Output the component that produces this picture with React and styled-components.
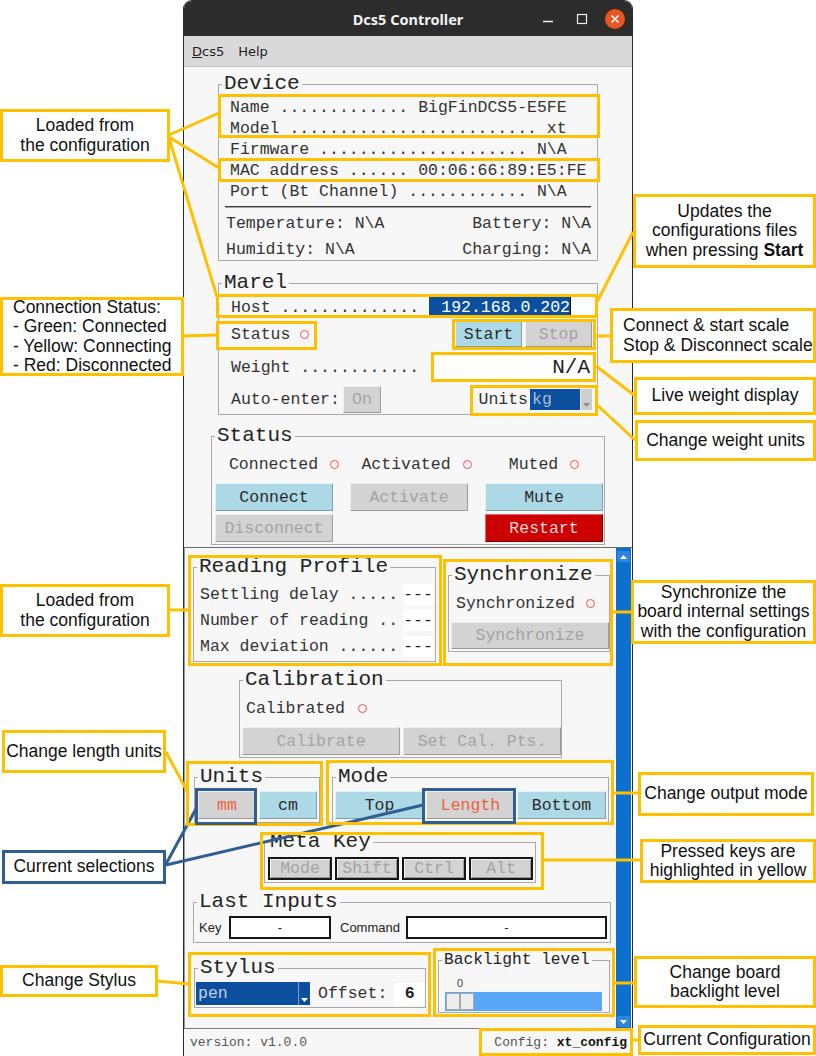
import React from 'react';
import styled, { createGlobalStyle } from 'styled-components';

const MONO = "'Liberation Mono', 'DejaVu Sans Mono', monospace";
const SANS = "'Liberation Sans', Arial, sans-serif";
const UI = "'DejaVu Sans', 'Noto Sans', sans-serif";
const YELLOW = '#ffc000';
const BLUE = '#2f5f92';

const GlobalStyle = createGlobalStyle`
  *, *::before, *::after { box-sizing: border-box; }
  html, body { margin: 0; padding: 0; background: #ffffff; }
`;

const Page = styled.div`
  position: relative;
  width: 816px;
  height: 1056px;
  overflow: hidden;
  background: #ffffff;
`;

const Window = styled.div`
  width: 450px;
  height: 1056px;
  margin-left: 183px;
  display: flex;
  flex-direction: column;
  background: #f7f7f7;
  border: 1px solid #2a2a2a;
  border-bottom: none;
  border-radius: 9px 9px 0 0;
  overflow: hidden;
`;

const TitleBar = styled.div`
  flex: none;
  height: 35px;
  display: grid;
  grid-template-columns: 1fr auto 1fr;
  align-items: center;
  padding: 0 7px;
  background: #2c2c2c;
`;

const Title = styled.div`
  grid-column: 2;
  font-family: 'Noto Sans', 'DejaVu Sans', sans-serif;
  font-weight: 700;
  font-size: 14.5px;
  color: #f2f2f2;
`;

const Controls = styled.div`
  grid-column: 3;
  justify-self: end;
  display: flex;
  align-items: center;
  gap: 13.5px;
`;

const CtlButton = styled.div`
  width: 20px;
  height: 20px;
  border-radius: 50%;
  display: flex;
  align-items: center;
  justify-content: center;
  background: ${p => (p.$close ? '#e95420' : 'transparent')};
`;

const MenuBar = styled.div`
  flex: none;
  height: 31px;
  display: flex;
  align-items: center;
  gap: 14px;
  padding-left: 8px;
  background: #d9d9d9;
  border-bottom: 1px solid #c4c4c4;
  font-family: ${UI};
  font-size: 13px;
  color: #1e1e1e;
`;

const Frame = styled.fieldset`
  flex: none;
  width: ${p => p.$w}px;
  margin: ${p => p.$mt || 0}px ${p => (p.$ml == null ? 'auto' : '0')} ${p => p.$mb || 0}px
    ${p => (p.$ml == null ? 'auto' : `${p.$ml}px`)};
  padding: 0;
  min-inline-size: 0;
  border: 1px solid #a9a9a9;
`;

const Legend = styled.legend`
  margin-left: 3px;
  padding: 0 2px;
  font-family: ${MONO};
  font-size: ${p => (p.$small ? 16.2 : 21)}px;
  line-height: ${p => (p.$small ? 18 : 22)}px;
  color: #232323;
`;

const Body = styled.div`
  padding: ${p => p.$pad};
`;

const Line = styled.div`
  display: flex;
  align-items: center;
  justify-content: ${p => (p.$between ? 'space-between' : 'flex-start')};
  height: ${p => p.$h || 21}px;
  margin-top: ${p => p.$mt || 0}px;
  padding-left: ${p => p.$pl || 0}px;
  font-family: ${MONO};
  font-size: 16.5px;
  color: #333333;
  white-space: pre;
`;

const Push = styled.span`
  margin-left: ${p => p.$ml || 'auto'};
`;

const Separator = styled.div`
  height: 2px;
  margin: 4px 0 5px -1px;
  border-top: 1px solid #3a3a3a;
  border-bottom: 1px solid #a4a4a4;
`;

const Indicator = styled.span`
  flex: none;
  width: 9px;
  height: 9px;
  margin-left: ${p => p.$gap || 12}px;
  border-radius: 50%;
  border: 1.5px solid #ff4c4c;
`;

const tones = {
  blue: ['#add8e6', '#2b2b2b', '#e4f3f8', '#7e9ea8'],
  off: ['#d3d3d3', '#a3a3a3', '#efefef', '#9b9b9b'],
  red: ['#cc0000', '#ffd9d9', '#e46a6a', '#7a0000'],
  sel: ['#d3d3d3', '#f0603c', '#efefef', '#9b9b9b'],
};

const Button = styled.div`
  flex: none;
  ${p => (p.$w ? `width: ${p.$w}px;` : '')}
  height: ${p => p.$h || 28}px;
  margin-left: ${p => p.$ml || 0};
  ${p => (p.$col ? `grid-column: ${p.$col};` : '')}
  display: flex;
  align-items: center;
  justify-content: center;
  font-family: ${MONO};
  font-size: 16.5px;
  background: ${p => tones[p.$tone][0]};
  color: ${p => tones[p.$tone][1]};
  border: 1px solid;
  border-color: ${p => `${tones[p.$tone][2]} ${tones[p.$tone][3]} ${tones[p.$tone][3]} ${tones[p.$tone][2]}`};
`;

const KeyButton = styled(Button)`
  border: 2px solid #161616;
  box-shadow: inset 1px 1px 0 #f2f2f2, inset -1px -1px 0 #9a9a9a;
`;

const ButtonRow = styled.div`
  display: flex;
  gap: ${p => p.$gap || 0}px;
  margin-top: ${p => p.$mt || 0}px;
`;

const Grid3 = styled.div`
  display: grid;
  grid-template-columns: repeat(3, 118px);
  column-gap: 17px;
  height: ${p => p.$h}px;
  margin-top: ${p => p.$mt}px;
`;

const IndCell = styled.div`
  display: flex;
  align-items: center;
  justify-content: center;
  padding-left: ${p => p.$shift || 0}px;
  font-family: ${MONO};
  font-size: 16.5px;
  color: #333333;
`;

const Entry = styled.div`
  flex: none;
  width: ${p => p.$w}px;
  height: ${p => p.$h}px;
  margin-left: ${p => p.$ml || 0};
  display: flex;
  align-items: center;
  justify-content: ${p => p.$justify || 'center'};
  padding: 0 ${p => p.$px || 0}px;
  background: #ffffff;
  border: ${p => (p.$outlined ? '2px solid #161616' : 'none')};
  font-family: ${p => (p.$sans ? SANS : MONO)};
  font-size: ${p => p.$size || 16.5}px;
  font-weight: ${p => (p.$bold ? 700 : 400)};
  color: #222222;
`;

const Selection = styled.span`
  width: 141px;
  height: 20px;
  display: flex;
  align-items: center;
  justify-content: flex-end;
  background: #0b4fa0;
  color: #ffffff;
`;

const Caret = styled.span`
  width: 1px;
  height: 20px;
  background: #111111;
`;

const Combo = styled.div`
  flex: none;
  display: flex;
  width: ${p => p.$w}px;
  height: ${p => p.$h}px;
  margin-left: ${p => p.$ml || 0};
`;

const ComboField = styled.div`
  flex: 1;
  display: flex;
  align-items: center;
  padding-left: 2px;
  background: #0b4f9e;
  color: ${p => p.$fg};
  font-family: ${MONO};
  font-size: 16.5px;
`;

const ComboArrow = styled.div`
  flex: none;
  width: 12px;
  display: flex;
  align-items: flex-end;
  justify-content: center;
  padding-bottom: 3px;
  background: ${p => (p.$dark ? '#0b4f9e' : '#cfcfcf')};
  border-left: 1px solid ${p => (p.$dark ? '#7d9fcc' : '#e8e8e8')};
`;

const FieldLabel = styled.span`
  flex: none;
  width: ${p => p.$w}px;
  margin-left: ${p => p.$ml || 0}px;
  font-family: ${SANS};
  font-size: 13px;
  color: #222222;
`;

const ScrollArea = styled.div`
  flex: none;
  height: 482px;
  display: flex;
  border-top: 1px solid #6a6a6a;
  border-bottom: 1px solid #7a7a7a;
  border-left: 1px solid #9a9a9a;
`;

const Canvas = styled.div`
  flex: 1;
  display: flex;
  flex-direction: column;
  overflow: hidden;
`;

const Row = styled.div`
  display: flex;
  align-items: flex-start;
  margin-top: ${p => p.$mt || 0}px;
`;

const Scrollbar = styled.div`
  flex: none;
  width: 15px;
  margin-right: 1px;
  display: flex;
  flex-direction: column;
  justify-content: space-between;
  padding: 3px 1px 1px;
  background: #0d70cf;
`;

const ScrollArrow = styled.div`
  height: 11px;
  display: flex;
  align-items: center;
  justify-content: center;
  background: #2d86dc;
`;

const ScaleValue = styled.div`
  width: 28px;
  margin: 8px 0 0 1px;
  text-align: center;
  font-family: ${SANS};
  font-size: 11px;
  line-height: 12px;
  color: #444444;
`;

const Trough = styled.div`
  display: flex;
  height: 19px;
  margin-top: 3px;
  padding: 1px;
  background: #5aa6f8;
`;

const Handle = styled.div`
  width: 14px;
  background: #ededed;
  border: 1px solid #a9a9a9;
`;

const Footer = styled.div`
  flex: 1;
  display: flex;
  align-items: center;
  justify-content: space-between;
  padding: 0 5px 0 6px;
  font-family: ${MONO};
  font-size: 13px;
  color: #555555;
  white-space: pre;
`;

const Strong = styled.b`
  color: #111111;
`;

const Overlay = styled.svg`
  position: absolute;
  left: 0;
  top: 0;
  pointer-events: none;
`;

const Callout = styled.div`
  position: absolute;
  left: ${p => p.$x}px;
  top: ${p => p.$y}px;
  width: ${p => p.$w}px;
  height: ${p => p.$h}px;
  display: flex;
  flex-direction: column;
  justify-content: center;
  align-items: ${p => (p.$left ? 'flex-start' : 'center')};
  padding-left: ${p => (p.$left ? 10 : 0)}px;
  background: #ffffff;
  border: 3px solid ${p => (p.$blue ? BLUE : YELLOW)};
  font-family: ${SANS};
  font-size: 17.5px;
  line-height: 19.4px;
  color: #111111;
  white-space: nowrap;
`;

const dotted = (label, n, value) => `${label} ${'.'.repeat(n)}${value ? ` ${value}` : ''}`;

const deviceRows = [
  dotted('Name', 13, 'BigFinDCS5-E5FE'),
  dotted('Model', 25, 'xt'),
  dotted('Firmware', 21, 'N\\A'),
  dotted('MAC address', 6, '00:06:66:89:E5:FE'),
  dotted('Port (Bt Channel)', 12, 'N\\A'),
];

const profileRows = [dotted('Settling delay', 5), dotted('Number of reading', 2), dotted('Max deviation', 6)];

const yellowBoxes = [
  [218, 94, 600, 138],
  [218, 158, 600, 182],
  [216, 294, 598, 318],
  [216, 321, 317, 350],
  [452, 319, 596, 350],
  [431, 352, 596, 382],
  [470, 385, 598, 416],
  [188, 555, 442, 666],
  [443, 559, 613, 666],
  [186, 761, 323, 826],
  [326, 760, 614, 825],
  [260, 832, 544, 890],
  [188, 952, 431, 1017],
  [433, 948, 615, 1017],
  [479, 1028, 633, 1056],
];

const blueBoxes = [
  [195, 788, 257, 825],
  [422, 788, 516, 824],
];

const yellowLines = [
  [169, 135, 219, 113],
  [169, 137, 219, 168],
  [169, 138, 217, 297],
  [183, 336, 216, 335],
  [633, 232, 597, 302],
  [596, 336, 610, 336],
  [596, 366, 634, 395],
  [597, 405, 635, 440],
  [169, 610, 188, 610],
  [613, 612, 631, 612],
  [166, 752, 187, 791],
  [614, 793, 638, 793],
  [544, 860, 640, 860],
  [157, 981, 189, 984],
  [615, 983, 634, 983],
  [633, 1040, 638, 1040],
];

const blueLines = [
  [166, 864, 197, 807],
  [166, 865, 423, 805],
];

const callouts = [
  { x: 0, y: 109, w: 170, h: 53, lines: ['Loaded from', 'the configuration'] },
  {
    x: 0, y: 297, w: 184, h: 79, left: true,
    lines: ['Connection Status:', '- Green: Connected', '- Yellow: Connecting', '- Red: Disconnected'],
  },
  {
    x: 633, y: 194, w: 183, h: 74,
    lines: ['Updates the', 'configurations files', <>when pressing <b>Start</b></>],
  },
  { x: 610, y: 308, w: 206, h: 55, left: true, lines: ['Connect & start scale', 'Stop & Disconnect scale'] },
  { x: 634, y: 377, w: 182, h: 38, lines: ['Live weight display'] },
  { x: 635, y: 420, w: 181, h: 41, lines: ['Change weight units'] },
  { x: 0, y: 584, w: 170, h: 53, lines: ['Loaded from', 'the configuration'] },
  { x: 631, y: 580, w: 185, h: 64, lines: ['Synchronize the', 'board internal settings', 'with the configuration'] },
  { x: 2, y: 730, w: 164, h: 43, lines: ['Change length units'] },
  { x: 2, y: 850, w: 164, h: 34, blue: true, lines: ['Current selections'] },
  { x: 638, y: 772, w: 176, h: 44, lines: ['Change output mode'] },
  { x: 640, y: 839, w: 176, h: 44, lines: ['Pressed keys are', 'highlighted in yellow'] },
  { x: 0, y: 965, w: 158, h: 32, lines: ['Change Stylus'] },
  { x: 634, y: 956, w: 182, h: 52, lines: ['Change board', 'backlight level'] },
  { x: 638, y: 1025, w: 178, h: 30, lines: ['Current Configuration'] },
];

const Tri = ({ up, color }) => (
  <svg width="7" height="4" viewBox="0 0 7 4">
    <polygon points={up ? '0,4 7,4 3.5,0' : '0,0 7,0 3.5,4'} fill={color} />
  </svg>
);

const Box = ({ b, color }) => (
  <rect x={b[0] + 1.5} y={b[1] + 1.5} width={b[2] - b[0] - 3} height={b[3] - b[1] - 3} fill="none" stroke={color} strokeWidth="3" />
);

const Annotations = () => (
  <Overlay width="816" height="1056" viewBox="0 0 816 1056">
    {yellowLines.map((l, i) => (
      <line key={`yl${i}`} x1={l[0]} y1={l[1]} x2={l[2]} y2={l[3]} stroke={YELLOW} strokeWidth="3" />
    ))}
    {blueLines.map((l, i) => (
      <line key={`bl${i}`} x1={l[0]} y1={l[1]} x2={l[2]} y2={l[3]} stroke={BLUE} strokeWidth="3" />
    ))}
    {yellowBoxes.map((b, i) => <Box key={`yb${i}`} b={b} color={YELLOW} />)}
    {blueBoxes.map((b, i) => <Box key={`bb${i}`} b={b} color={BLUE} />)}
  </Overlay>
);

const Controller = () => (
  <Window>
    <TitleBar>
      <Title>Dcs5 Controller</Title>
      <Controls>
        <CtlButton>
          <svg width="20" height="20" viewBox="0 0 20 20">
            <line x1="5" y1="12.5" x2="15" y2="12.5" stroke="#f0f0f0" strokeWidth="1.4" />
          </svg>
        </CtlButton>
        <CtlButton>
          <svg width="20" height="20" viewBox="0 0 20 20">
            <rect x="5.5" y="5.5" width="9" height="9" fill="none" stroke="#f0f0f0" strokeWidth="1.2" />
          </svg>
        </CtlButton>
        <CtlButton $close>
          <svg width="20" height="20" viewBox="0 0 20 20">
            <path d="M6.5 6.5 L13.5 13.5 M13.5 6.5 L6.5 13.5" stroke="#ffffff" strokeWidth="1.6" />
          </svg>
        </CtlButton>
      </Controls>
    </TitleBar>

    <MenuBar>
      <span><u>D</u>cs5</span>
      <span>Help</span>
    </MenuBar>

    <Frame $w={380} $mt={6}>
      <Legend>Device</Legend>
      <Body $pad="2px 6px 0 7px">
        {deviceRows.map(r => (
          <Line key={r} $pl={4}>{r}</Line>
        ))}
        <Separator />
        <Line $between>
          <span>{'Temperature: N\\A'}</span>
          <span>{'Battery: N\\A'}</span>
        </Line>
        <Line $between $mt={5}>
          <span>{'Humidity: N\\A'}</span>
          <span>{'Charging: N\\A'}</span>
        </Line>
      </Body>
    </Frame>

    <Frame $w={380} $mt={11}>
      <Legend>Marel</Legend>
      <Body $pad="0 5px 1px 12px">
        <Line $h={22} $mt={2}>
          {dotted('Host', 14)}
          <Entry $w={163} $h={22} $ml="auto" $justify="flex-start">
            <Selection>192.168.0.202</Selection>
            <Caret />
          </Entry>
        </Line>
        <Line $h={26} $mt={3}>
          Status
          <Indicator $gap={10} />
          <Button $tone="blue" $w={67} $h={26} $ml="auto">Start</Button>
          <Button $tone="off" $w={67} $h={26} $ml="3px">Stop</Button>
        </Line>
        <Line $h={25} $mt={8}>
          {dotted('Weight', 12)}
          <Entry $w={159} $h={25} $ml="auto" $justify="flex-end" $px={2} $size={21}>N/A</Entry>
        </Line>
        <Line $h={27} $mt={6}>
          Auto-enter:
          <Button $tone="off" $w={38} $h={27} $ml="3px">On</Button>
          <Push>Units</Push>
          <Combo $w={62} $h={21} $ml="2px">
            <ComboField $fg="#a9bbd6">kg</ComboField>
            <ComboArrow>
              <Tri color="#8a8a8a" />
            </ComboArrow>
          </Combo>
        </Line>
      </Body>
    </Frame>

    <Frame $w={394} $mt={10} $mb={2}>
      <Legend>Status</Legend>
      <Body $pad="0 0 2px 3px">
        <Grid3 $h={21} $mt={7}>
          <IndCell $shift={20}>Connected<Indicator /></IndCell>
          <IndCell $shift={15}>Activated<Indicator /></IndCell>
          <IndCell>Muted<Indicator /></IndCell>
        </Grid3>
        <Grid3 $h={28} $mt={8}>
          <Button $tone="blue">Connect</Button>
          <Button $tone="off">Activate</Button>
          <Button $tone="blue">Mute</Button>
        </Grid3>
        <Grid3 $h={28} $mt={3}>
          <Button $tone="off">Disconnect</Button>
          <Button $tone="red" $col={3}>Restart</Button>
        </Grid3>
      </Body>
    </Frame>

    <ScrollArea>
      <Canvas>
        <Row $mt={8}>
          <Frame $w={243} $ml={8}>
            <Legend>Reading Profile</Legend>
            <Body $pad="3px 2px 2px 6px">
              {profileRows.map(r => (
                <Line key={r} $h={26}>
                  {r}
                  <Entry $w={30} $h={21} $ml="5px">---</Entry>
                </Line>
              ))}
            </Body>
          </Frame>
          <Frame $w={162} $ml={12} $mt={8}>
            <Legend>Synchronize</Legend>
            <Body $pad="0 1px 2px 2px">
              <Line $mt={7} $pl={5}>
                Synchronized
                <Indicator $gap={11} />
              </Line>
              <ButtonRow $mt={8}>
                <Button $tone="off" $w={158} $h={27}>Synchronize</Button>
              </ButtonRow>
            </Body>
          </Frame>
        </Row>

        <Row $mt={7}>
          <Frame $w={323} $ml={54}>
            <Legend>Calibration</Legend>
            <Body $pad="0 1px 2px 2px">
              <Line $mt={7} $pl={4}>
                Calibrated
                <Indicator $gap={13} />
              </Line>
              <ButtonRow $gap={3} $mt={8}>
                <Button $tone="off" $w={158}>Calibrate</Button>
                <Button $tone="off" $w={158}>Set Cal. Pts.</Button>
              </ButtonRow>
            </Body>
          </Frame>
        </Row>

        <Row $mt={8}>
          <Frame $w={126} $ml={9}>
            <Legend>Units</Legend>
            <Body $pad="0 2px 3px 3px">
              <ButtonRow $gap={3} $mt={3}>
                <Button $tone="sel" $w={58}>mm</Button>
                <Button $tone="blue" $w={58}>cm</Button>
              </ButtonRow>
            </Body>
          </Frame>
          <Frame $w={277} $ml={12}>
            <Legend>Mode</Legend>
            <Body $pad="0 2px 3px 2px">
              <ButtonRow $gap={2} $mt={3}>
                <Button $tone="blue" $w={89}>Top</Button>
                <Button $tone="sel" $w={89}>Length</Button>
                <Button $tone="blue" $w={89}>Bottom</Button>
              </ButtonRow>
            </Body>
          </Frame>
        </Row>

        <Row $mt={8}>
          <Frame $w={272} $ml={79}>
            <Legend>Meta Key</Legend>
            <Body $pad="0 2px 2px 3px">
              <ButtonRow $gap={3} $mt={4}>
                {['Mode', 'Shift', 'Ctrl', 'Alt'].map(k => (
                  <KeyButton key={k} $tone="off" $w={64} $h={23}>{k}</KeyButton>
                ))}
              </ButtonRow>
            </Body>
          </Frame>
        </Row>

        <Row $mt={8}>
          <Frame $w={418} $ml={8}>
            <Legend>Last Inputs</Legend>
            <Body $pad="0 3px 3px 5px">
              <Line $h={23} $mt={3}>
                <FieldLabel $w={30}>Key</FieldLabel>
                <Entry $w={102} $h={23} $outlined $sans $size={13}>-</Entry>
                <FieldLabel $w={66} $ml={9}>Command</FieldLabel>
                <Entry $w={201} $h={23} $outlined $sans $size={13}>-</Entry>
              </Line>
            </Body>
          </Frame>
        </Row>

        <Row $mt={8}>
          <Frame $w={232} $ml={9} $mt={6}>
            <Legend>Stylus</Legend>
            <Body $pad="0 0 2px 1px">
              <Line $h={23} $mt={3}>
                <Combo $w={114} $h={23}>
                  <ComboField $fg="#c3d0e6">pen</ComboField>
                  <ComboArrow $dark>
                    <Tri color="#ffffff" />
                  </ComboArrow>
                </Combo>
                <Push $ml="8px">Offset:</Push>
                <Entry $w={31} $h={22} $ml="7px" $bold>6</Entry>
              </Line>
            </Body>
          </Frame>
          <Frame $w={172} $ml={12}>
            <Legend $small>Backlight level</Legend>
            <Body $pad="0 7px 1px 6px">
              <ScaleValue>0</ScaleValue>
              <Trough>
                <Handle />
                <Handle />
              </Trough>
            </Body>
          </Frame>
        </Row>
      </Canvas>
      <Scrollbar>
        <ScrollArrow>
          <Tri up color="#ffffff" />
        </ScrollArrow>
        <ScrollArrow>
          <Tri color="#ffffff" />
        </ScrollArrow>
      </Scrollbar>
    </ScrollArea>

    <Footer>
      <span>version: v1.0.0</span>
      <span>
        {'Config: '}
        <Strong>xt_config</Strong>
      </span>
    </Footer>
  </Window>
);

export default function App() {
  return (
    <>
      <GlobalStyle />
      <Page>
        <Controller />
        <Annotations />
        {callouts.map((c, i) => (
          <Callout key={i} $x={c.x} $y={c.y} $w={c.w} $h={c.h} $left={c.left} $blue={c.blue}>
            {c.lines.map((l, j) => (
              <div key={j}>{l}</div>
            ))}
          </Callout>
        ))}
      </Page>
    </>
  );
}
